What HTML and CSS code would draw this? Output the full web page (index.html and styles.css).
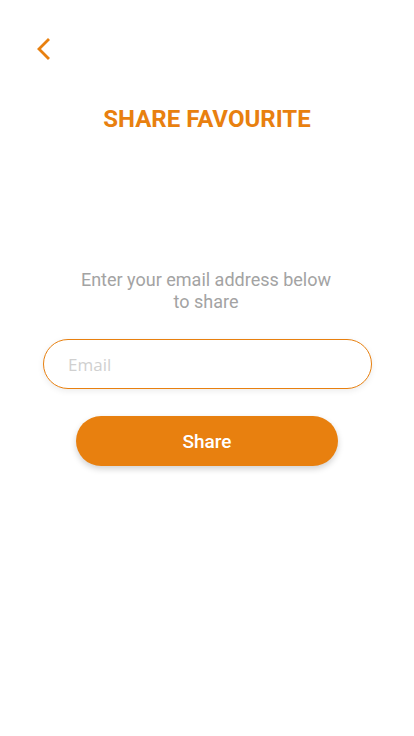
FILE: index.html
```html
<!DOCTYPE html>
<html>
<head>
<meta charset="utf-8">
<link rel="stylesheet" href="styles.css">
</head>
<body>
<div class="screen">
  <header class="topbar">
    <button class="back" aria-label="Back">
      <svg width="16" height="24" viewBox="0 0 16 24"><path d="M12 3 L3 12 L12 21" fill="none" stroke="#E8800F" stroke-width="2.8" stroke-linecap="square"/></svg>
    </button>
  </header>
  <h1 class="title">SHARE FAVOURITE</h1>
  <p class="hint">Enter your email address below<br>to share</p>
  <input class="email" type="email" placeholder="Email">
  <button class="share">Share</button>
</div>
</body>
</html>
```
FILE: styles.css
```css
* { box-sizing: border-box; }
html, body { margin: 0; padding: 0; background: #fff; }
.screen {
  width: 414px;
  height: 736px;
  display: flex;
  flex-direction: column;
  align-items: center;
  font-family: Roboto, "Liberation Sans", sans-serif;
}
.topbar {
  align-self: stretch;
  height: 60px;
  padding: 37px 0 0 36px;
}
.back {
  background: none;
  border: 0;
  padding: 0;
  display: block;
}
.title {
  margin: 44px 0 0;
  font-size: 24px;
  font-weight: 700;
  color: #E8800F;
  line-height: 30px;
  letter-spacing: 0;
}
.hint {
  margin: 135px 0 0 -2px;
  font-size: 18px;
  line-height: 22px;
  color: #a3a3a3;
  text-align: center;
}
.email {
  margin: 26px 0 0 1px;
  width: 329px;
  height: 50px;
  border: 1px solid #E8800F;
  border-radius: 25px;
  padding: 0 0 0 24px;
  font-family: "Open Sans", sans-serif;
  font-size: 17px;
  color: #333;
  box-shadow: 0 2px 6px rgba(0,0,0,0.08);
  outline: none;
}
.email::placeholder { color: #d0d0d0; }
.share {
  margin: 27px 0 0;
  width: 262px;
  height: 50px;
  border: 0;
  border-radius: 25px;
  background: #E8800F;
  color: #fff;
  font-family: Roboto, sans-serif;
  font-size: 19px;
  font-weight: 500;
  box-shadow: 0 3px 6px rgba(0,0,0,0.18);
}
```
